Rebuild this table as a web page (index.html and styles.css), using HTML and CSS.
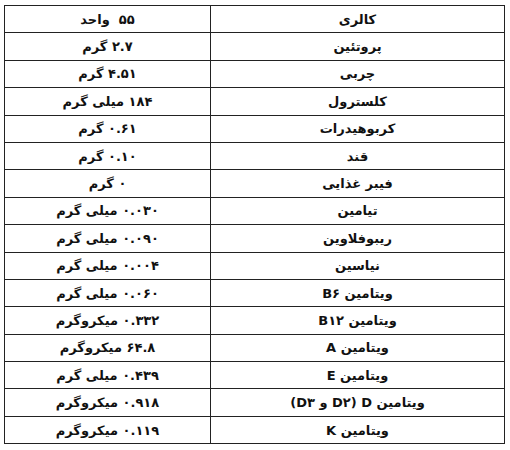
FILE: index.html
```html
<!DOCTYPE html>
<html lang="fa" dir="rtl">
<head>
<meta charset="utf-8">
<link rel="stylesheet" href="styles.css">
</head>
<body>
<table class="nutri">
<tbody>
<tr><td class="name">کالری</td><td class="val">۵۵&nbsp; واحد</td></tr>
<tr><td class="name">پروتئین</td><td class="val">۲.۷ گرم</td></tr>
<tr><td class="name">چربی</td><td class="val">۴.۵۱ گرم</td></tr>
<tr><td class="name">کلسترول</td><td class="val">۱۸۴ میلی گرم</td></tr>
<tr><td class="name">کربوهیدرات</td><td class="val">۰.۶۱ گرم</td></tr>
<tr><td class="name">قند</td><td class="val">۰.۱۰ گرم</td></tr>
<tr><td class="name">فیبر غذایی</td><td class="val">۰ گرم</td></tr>
<tr><td class="name">تیامین</td><td class="val">۰.۰۳۰ میلی گرم</td></tr>
<tr><td class="name">ریبوفلاوین</td><td class="val">۰.۰۹۰ میلی گرم</td></tr>
<tr><td class="name">نیاسین</td><td class="val">۰.۰۰۴ میلی گرم</td></tr>
<tr><td class="name">ویتامین B۶</td><td class="val">۰.۰۶۰ میلی گرم</td></tr>
<tr><td class="name">ویتامین B۱۲</td><td class="val">۰.۳۳۲ میکروگرم</td></tr>
<tr><td class="name">ویتامین A</td><td class="val">۶۴.۸ میکروگرم</td></tr>
<tr><td class="name">ویتامین E</td><td class="val">۰.۴۳۹ میلی گرم</td></tr>
<tr><td class="name">ویتامین D (D۲ و D۳)</td><td class="val">۰.۹۱۸ میکروگرم</td></tr>
<tr><td class="name">ویتامین K</td><td class="val">۰.۱۱۹ میکروگرم</td></tr>
</tbody>
</table>
</body>
</html>
```
FILE: styles.css
```css
html, body {
  margin: 0;
  padding: 0;
  background: #ffffff;
}
body {
  padding: 5px;
  font-family: "DejaVu Sans", sans-serif;
  font-weight: bold;
  font-size: 13px;
  color: #111;
}
.nutri {
  border-collapse: collapse;
  width: 501px;
  table-layout: fixed;
}
.nutri td {
  border: 1px solid #222;
  height: 26.4px;
  padding: 0;
  text-align: center;
  vertical-align: middle;
  line-height: 1;
  white-space: nowrap;
}
.nutri td.name {
  width: 293px;
}
```
